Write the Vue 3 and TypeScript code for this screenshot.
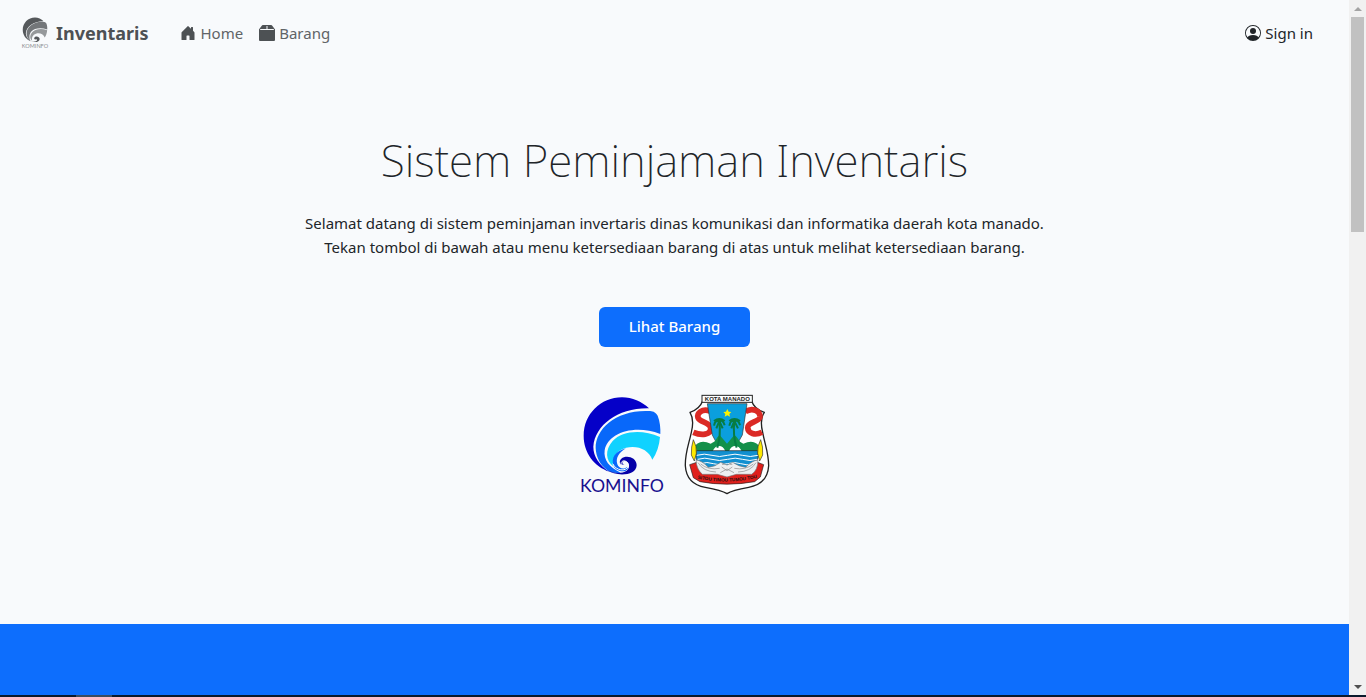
<script setup lang="ts">
interface NavItem {
  label: string
  href: string
  icon: string
}

const navItems: NavItem[] = [
  {
    label: 'Home',
    href: '#home',
    icon: 'M6.5 14.5v-3.5c0-.25.25-.5.5-.5h2c.25 0 .5.25.5.5v3.5a.5.5 0 0 0 .5.5h4a.5.5 0 0 0 .5-.5v-7a.5.5 0 0 0-.146-.354L13 5.793V2.5a.5.5 0 0 0-.5-.5h-1a.5.5 0 0 0-.5.5v1.293L8.354 1.146a.5.5 0 0 0-.708 0l-6 6A.5.5 0 0 0 1.5 7.5v7a.5.5 0 0 0 .5.5h4a.5.5 0 0 0 .5-.5',
  },
  {
    label: 'Barang',
    href: '#barang',
    icon: 'M3.75 0a1 1 0 0 0-.8.4L.1 4.2a.5.5 0 0 0-.1.3V15a1 1 0 0 0 1 1h14a1 1 0 0 0 1-1V4.5a.5.5 0 0 0-.1-.3L13.05.4a1 1 0 0 0-.8-.4zM15 4.667V5H1v-.333L1.5 4h6V1h1v3h6z',
  },
]
</script>

<template>
  <div class="screen">
    <div class="viewport">
      <div class="page">
        <header class="navbar">
          <a class="brand" href="#home">
            <svg class="brand-logo" viewBox="20 32 272 300" aria-hidden="true">
              <path fill="#55585b" d="M237 72C215 50 187 37 156 37C92 37 41 88 41 152C41 203 72 244 118 260C88 240 70 215 70 185C75 120 145 70 237 72Z" />
              <path fill="#737679" d="M263 92C255 80 248 78 236 78C140 72 76 130 77 190C78 215 90 240 112 256C100 225 100 190 124 165C150 138 210 128 271 150C272 130 270 110 263 92Z" />
              <path fill="#96999b" d="M270 156C215 136 160 146 132 172C105 200 105 235 130 255C122 225 135 198 165 188C200 178 232 190 247 224C260 205 268 182 270 156Z" />
              <path fill="#55585b" d="M110 256C150 275 200 270 200 238C199 218 172 210 156 219C142 228 148 245 162 242C176 236 182 252 164 260C145 268 125 264 110 256Z" />
              <text x="156" y="326" font-size="52" text-anchor="middle" fill="#8b8e90">KOMINFO</text>
            </svg>
            <span>Inventaris</span>
          </a>
          <nav class="links">
            <a v-for="item in navItems" :key="item.label" class="nav-link" :href="item.href">
              <svg class="icon" viewBox="0 0 16 16" aria-hidden="true"><path :d="item.icon" /></svg>
              <span>{{ item.label }}</span>
            </a>
          </nav>
          <a class="nav-link sign-in" href="#sign-in">
            <svg class="icon" viewBox="0 0 16 16" aria-hidden="true">
              <path d="M11 6a3 3 0 1 1-6 0 3 3 0 0 1 6 0" />
              <path fill-rule="evenodd" d="M0 8a8 8 0 1 1 16 0A8 8 0 0 1 0 8m8-7a7 7 0 0 0-5.468 11.37C3.242 11.226 4.805 10 8 10s4.757 1.225 5.468 2.37A7 7 0 0 0 8 1" />
            </svg>
            <span>Sign in</span>
          </a>
        </header>

        <main class="hero">
          <h1>Sistem Peminjaman Inventaris</h1>
          <p>
            Selamat datang di sistem peminjaman invertaris dinas komunikasi dan informatika daerah kota manado.<br />
            Tekan tombol di bawah atau menu ketersediaan barang di atas untuk melihat ketersediaan barang.
          </p>
          <button type="button" class="cta">Lihat Barang</button>

          <div class="logos">
            <svg class="kominfo" viewBox="0 0 330 360" role="img" aria-label="Kominfo">
              <path fill="#0500c8" d="M237 70C215 50 187 37 156 37C92 37 41 88 41 152C41 203 72 244 118 260C88 240 70 215 70 185C75 120 145 68 237 70Z" />
              <path fill="#0868fa" d="M263 92C255 80 248 78 236 78C140 74 76 130 77 190C78 215 90 240 112 256C125 264 140 266 152 263C118 248 100 225 104 196C112 146 190 116 271 147C272 130 270 110 263 92Z" />
              <path fill="#10d2ff" d="M270 156C215 132 156 138 128 168C104 196 107 226 130 244C126 216 140 196 168 188C204 180 236 194 247 224C260 205 268 182 270 156Z" />
              <path fill="#0868fa" d="M132 246C120 218 138 198 168 190C148 202 136 218 142 238C146 252 164 254 172 245C178 252 166 262 150 258C142 256 136 252 132 246Z" />
              <path fill="#0500a8" d="M112 256C137 275 200 274 200 240C199 216 168 209 154 221C144 231 152 244 163 238C154 237 156 228 163 228C176 227 184 246 170 257C154 267 132 265 112 256Z" />
              <path fill="none" stroke="#fff" stroke-width="3" d="M128 236C138 258 168 260 174 245C178 230 160 222 154 232C151 239 158 243 162 239" />
              <text x="156" y="321" font-size="53" text-anchor="middle" fill="#18108f">KOMINFO</text>
            </svg>

            <svg class="manado" viewBox="0 0 300 360" role="img" aria-label="Kota Manado">
              <path fill="#fff" stroke="#222" stroke-width="4" stroke-linejoin="round" d="M68 48C62 64 48 76 30 82C40 98 40 118 34 142C26 180 15 204 16 242C18 276 38 300 76 307C106 312 126 316 141 326C156 316 178 312 206 307C244 300 264 276 266 242C266 204 255 180 248 142C242 118 242 98 253 82C235 76 220 64 215 48Z" />
              <path fill="none" stroke="#db2a25" stroke-width="17" d="M90 78C66 70 50 84 54 98C60 114 90 110 92 130C93 150 64 152 40 142" />
              <path fill="none" stroke="#db2a25" stroke-width="17" d="M196 80C218 66 241 78 240 96C238 112 203 110 203 128C204 146 226 152 246 142" />
              <path fill="#14904a" d="M40 190Q56 160 92 176L120 160H162L190 176Q226 160 242 190V202H40Z" />
              <path fill="#0b9fdd" stroke="#333" stroke-width="2" d="M82 56H201L187 150L168 184H115L97 150Z" />
              <path fill="#fff200" d="M142 72L146 80L154 81L148 87L150 95L142 91L134 95L136 87L130 81L138 80Z" />
              <path fill="#12914a" d="M95 199Q104 160 119 150L141 176L163 150Q180 160 189 199Z" />
              <path fill="#fff" d="M98 199C106 178 129 178 136 199ZM147 199C154 178 177 178 185 199Z" />
              <g fill="none" stroke="#087c42" stroke-width="6">
                <path d="M118 109Q123 150 112 188M163 109Q158 150 170 188" />
                <path d="M102 122Q106 102 118 110Q128 101 134 121M102 108Q118 96 134 108M109 130L118 108L128 130M148 122Q153 102 163 110Q175 101 180 121M148 108Q163 96 180 108M154 130L163 108L174 130" />
              </g>
              <path fill="#1290d0" stroke="#222" stroke-width="2" d="M48 197H234V218Q222 247 208 249H75Q53 244 48 218Z" />
              <path fill="none" stroke="#fff" stroke-width="3" d="M50 211Q73 204 96 211T142 211T188 211T234 211M53 223Q74 216 96 223T142 223T188 223T231 223M62 236Q80 229 100 236T142 236T182 236T222 236" />
              <path fill="#e0201c" stroke="#222" stroke-width="2" d="M29 239L53 231L67 258H214L230 231L251 239L241 276L224 290Q140 305 60 290L40 278Z" />
              <path fill="#edf0f1" stroke="#777" stroke-width="2" d="M48 225Q65 226 85 247Q106 245 122 232L141 240L158 232Q177 245 197 247Q217 226 234 225Q234 255 215 268H169L141 276L112 268H67Q49 252 48 225Z" />
              <path fill="none" stroke="#888" stroke-width="2" d="M54 233Q70 260 108 261M62 237Q85 256 119 250M228 233Q212 260 174 261M220 237Q197 256 163 250M125 246L141 257L157 246M126 238H134M149 238H157M121 263L141 252L162 263" />
              <path fill="#ffea00" stroke="#333" stroke-width="2" d="M40 164Q51 183 49 205L43 228L34 210Q33 185 40 164ZM242 164Q231 183 233 205L239 228L248 210Q250 185 242 164Z" />
              <rect x="66" y="31" width="151" height="21" fill="#fff" stroke="#222" stroke-width="3" />
              <text x="142" y="48" font-size="18" font-weight="700" text-anchor="middle" fill="#222">KOTA MANADO</text>
              <path id="motto-line" fill="none" d="M50 280Q140 300 234 278" />
              <text font-size="14" font-weight="700" fill="#221010"><textPath href="#motto-line" startOffset="50%" text-anchor="middle">SITOU TIMOU TUMOU TOU</textPath></text>
            </svg>
          </div>
        </main>
        <section class="band"></section>
      </div>

      <div class="scrollbar" aria-hidden="true">
        <svg class="arrow up" viewBox="0 0 17 17"><path d="M5 11H13L9 7Z" /></svg>
        <div class="thumb"></div>
        <svg class="arrow down" viewBox="0 0 17 17"><path d="M5 7H13L9 11Z" /></svg>
      </div>
    </div>
    <div class="taskbar"><div class="task"></div></div>
  </div>
</template>

<style>
body {
  margin: 0;
}
</style>

<style scoped>
.screen {
  display: flex;
  flex-direction: column;
  height: 100vh;
  overflow: hidden;
  color: #212529;
  font-family: "Noto Sans", "Open Sans", sans-serif;
  font-size: 15px;
  line-height: 24px;
}
.viewport {
  display: flex;
  flex: 1;
  min-height: 0;
}
.page {
  display: flex;
  flex: 1;
  flex-direction: column;
  min-width: 0;
  background: #f8fafc;
}
.navbar {
  display: flex;
  align-items: center;
  padding: 17px 36px 15px 20px;
}
.brand {
  display: flex;
  align-items: center;
  gap: 6px;
  margin-right: 32px;
  color: #4d5154;
  font-size: 18px;
  font-weight: 700;
  line-height: 32px;
  text-decoration: none;
}
.brand-logo {
  width: 30px;
  height: 32px;
  font-family: Lato, sans-serif;
  font-weight: 400;
}
.links {
  display: flex;
  gap: 16px;
}
.nav-link {
  display: flex;
  align-items: center;
  gap: 4px;
  color: #4d5154;
  text-decoration: none;
}
.icon {
  width: 16px;
  height: 16px;
  fill: currentColor;
}
.links span {
  color: #606467;
}
.sign-in {
  margin-left: auto;
  color: #212529;
}
.hero {
  display: flex;
  flex-direction: column;
  align-items: center;
  padding: 68px 24px 119px;
  text-align: center;
}
h1 {
  margin: 0 0 23px;
  font-size: 44px;
  font-weight: 200;
  line-height: 56px;
}
p {
  margin: 0 0 48px;
}
.cta {
  padding: 7px 30px 9px;
  border: 0;
  border-radius: 6px;
  background: #0d6efd;
  color: #fff;
  font: 500 15px/24px "Noto Sans", "Open Sans", sans-serif;
}
.logos {
  display: flex;
  margin-top: 38px;
}
.kominfo {
  width: 110px;
  height: 120px;
  font-family: Lato, sans-serif;
}
.manado {
  width: 100px;
  height: 120px;
  font-family: "Liberation Sans", sans-serif;
}
.band {
  flex: 1;
  background: #0d6efd;
}
.scrollbar {
  display: flex;
  flex-direction: column;
  width: 17px;
  background: #f1f1f1;
}
.arrow {
  width: 17px;
  height: 17px;
}
.up {
  fill: #a3a3a3;
}
.down {
  margin-top: auto;
  fill: #505050;
}
.thumb {
  height: 215px;
  margin: 0 2px;
  background: #c1c1c1;
}
.taskbar {
  height: 2px;
  padding-left: 76px;
  background: #0b1a2c;
}
.task {
  width: 36px;
  height: 2px;
  background: #3a4c60;
}
</style>
